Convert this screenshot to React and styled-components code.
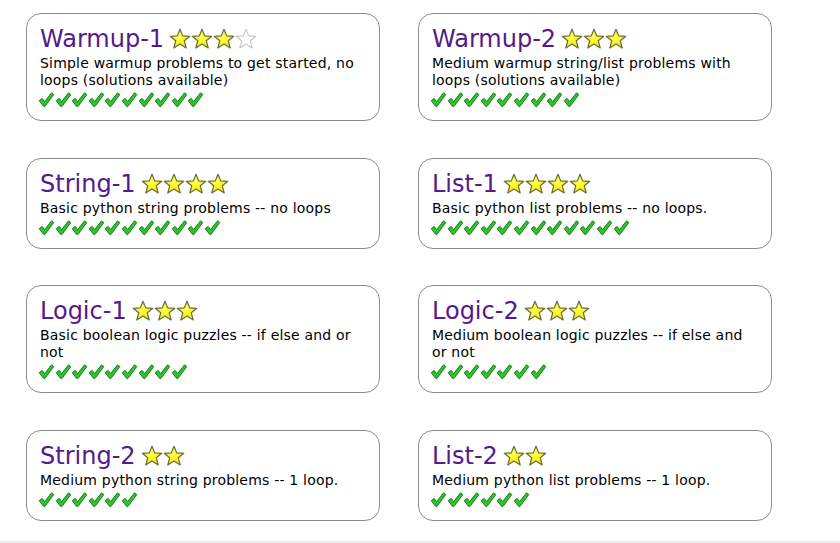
import React from "react";
import styled, { createGlobalStyle } from "styled-components";

const GlobalStyle = createGlobalStyle`
  html, body {
    margin: 0;
    padding: 0;
    background: #fff;
  }
  body {
    font-family: "DejaVu Sans", Verdana, sans-serif;
    color: #000;
  }
`;

const sections = [
  { name: "Warmup-1", stars: 3, outOf: 4, desc: "Simple warmup problems to get started, no loops (solutions available)", checks: 10 },
  { name: "Warmup-2", stars: 3, outOf: 3, desc: "Medium warmup string/list problems with loops (solutions available)", checks: 9 },
  { name: "String-1", stars: 4, outOf: 4, desc: "Basic python string problems -- no loops", checks: 11 },
  { name: "List-1", stars: 4, outOf: 4, desc: "Basic python list problems -- no loops.", checks: 12 },
  { name: "Logic-1", stars: 3, outOf: 3, desc: "Basic boolean logic puzzles -- if else and or not", checks: 9 },
  { name: "Logic-2", stars: 3, outOf: 3, desc: "Medium boolean logic puzzles -- if else and or not", checks: 7 },
  { name: "String-2", stars: 2, outOf: 2, desc: "Medium python string problems -- 1 loop.", checks: 6 },
  { name: "List-2", stars: 2, outOf: 2, desc: "Medium python list problems -- 1 loop.", checks: 6 },
];

/* ===================== styled ===================== */
const Page = styled.div`
  height: 100vh;
  display: flex;
  flex-direction: column;
  overflow: hidden;
`;

const Main = styled.main`
  flex: 1;
  padding: 13px 0 0 26px;
`;

const Grid = styled.div`
  display: grid;
  grid-template-columns: 354px 354px;
  column-gap: 38px;
  row-gap: 36.5px;
  align-items: start;
`;

const Card = styled.div`
  border: 1px solid #8c8c8c;
  border-radius: 15px;
  padding: 10px 13px 12px 13px;
  background: #fff;
`;

const TitleRow = styled.div`
  display: flex;
  align-items: center;
  height: 30px;
`;

const Title = styled.a`
  font-size: 24px;
  color: #551a8b;
  text-decoration: none;
  margin-right: 5px;
`;

const Stars = styled.span`
  display: inline-flex;
  align-items: center;
`;

const Desc = styled.div`
  font-size: 14px;
  line-height: 17px;
  letter-spacing: 0.2px;
  margin-top: 1px;
`;

const Checks = styled.div`
  display: flex;
  height: 17px;
  margin-top: 2px;
  margin-left: -2px;
`;

const Strip = styled.div`
  height: 2px;
  background: #f0f0f0;
`;

/* ===================== icons ===================== */
function Star({ filled }) {
  return (
    <svg width="22" height="22" viewBox="0 0 22 22">
      {filled && (
        <defs>
          <radialGradient id="sg" cx="45%" cy="40%" r="60%">
            <stop offset="0%" stopColor="#ffff55" />
            <stop offset="100%" stopColor="#f5ea00" />
          </radialGradient>
        </defs>
      )}
      <polygon
        points="11,1.2 13.7,7.9 20.8,8.3 15.3,12.8 17.2,20 11,16.1 4.8,20 6.7,12.8 1.2,8.3 8.3,7.9"
        fill={filled ? "url(#sg)" : "#fff"}
        stroke={filled ? "#6a6a3c" : "#c8c8c8"}
        strokeWidth="1.2"
        strokeLinejoin="round"
      />
    </svg>
  );
}

function Check() {
  return (
    <svg width="16.6" height="17" viewBox="0 0 16.6 17">
      <path
        d="M1.2 9.6 L4.2 7.4 L6.6 10.6 L13.6 1.8 L15.8 3.6 L7 15.4 Q6.2 16.2 5.4 15.2 Z"
        fill="#2ec22e"
        stroke="#1b7d1b"
        strokeWidth="1"
        strokeLinejoin="round"
      />
    </svg>
  );
}

/* ===================== UI ===================== */
function SectionCard({ name, stars, outOf, desc, checks }) {
  return (
    <Card>
      <TitleRow>
        <Title href="#">{name}</Title>
        <Stars>
          {Array.from({ length: outOf }, (_, i) => (
            <Star key={i} filled={i < stars} />
          ))}
        </Stars>
      </TitleRow>
      <Desc>{desc}</Desc>
      <Checks>
        {Array.from({ length: checks }, (_, i) => (
          <Check key={i} />
        ))}
      </Checks>
    </Card>
  );
}

export default function App() {
  return (
    <Page>
      <GlobalStyle />
      <Main>
        <Grid>
          {sections.map((s) => (
            <SectionCard key={s.name} {...s} />
          ))}
        </Grid>
      </Main>
      <Strip />
    </Page>
  );
}
